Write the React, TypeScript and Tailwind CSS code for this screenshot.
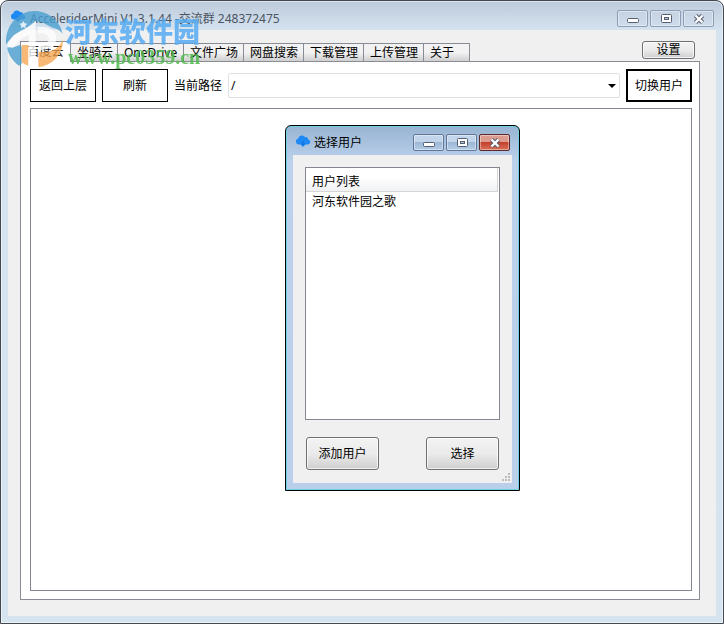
import type { ReactNode } from "react";

const tabs = [
  { label: "坐骑云", width: "w-[47px]" },
  { label: "OneDrive", width: "w-[66px]" },
  { label: "文件广场", width: "w-[60px]" },
  { label: "网盘搜索", width: "w-[60px]" },
  { label: "下载管理", width: "w-[60px]" },
  { label: "上传管理", width: "w-[60px]" },
  { label: "关于", width: "w-[46px]" },
];

function CloudIcon() {
  return (
    <svg className="h-4 w-4 shrink-0" viewBox="0 0 16 16" aria-hidden="true">
      <path
        d="M4 11.5a3 3 0 0 1-.8-5.9A3.8 3.8 0 0 1 10 4a3.1 3.1 0 0 1 3.3 2.4A2.6 2.6 0 0 1 12.6 11.5H10.5L8 14 5.5 11.5Z"
        fill="#1e88f5"
      />
      <path d="M8 8v4M6.5 10.5 8 12l1.5-1.5" stroke="#0d6ad0" fill="none" />
    </svg>
  );
}

function CaptionButton({
  kind,
  active = false,
}: {
  kind: "minimize" | "maximize" | "close";
  active?: boolean;
}) {
  const tone = !active
    ? "border-[#8d9db5] bg-linear-to-b from-[#c6d3e3] to-[#cddbea]"
    : kind === "close"
      ? "border-[#5c2a2a] bg-linear-to-b from-[#dc9c90] from-45% via-[#c4402c] via-50% to-[#d8705a]"
      : "border-[#60779a] bg-linear-to-b from-[#c3d5ea] from-45% via-[#9db7d5] via-50% to-[#b4cce6]";
  return (
    <button
      type="button"
      aria-label={kind}
      className={`flex h-[17px] w-[31px] items-center justify-center rounded-xs border inset-ring inset-ring-white/40 ${tone}`}
    >
      <svg className="h-3 w-3" viewBox="0 0 12 12" aria-hidden="true">
        {kind === "minimize" && (
          <rect x="0.5" y="5.5" width="11" height="4" rx="1" fill="#fff" stroke="#555e6e" />
        )}
        {kind === "maximize" && (
          <>
            <rect x="1.5" y="1.5" width="10" height="8" rx="1" fill="#fff" stroke="#555e6e" />
            <rect x="4.5" y="4.5" width="4" height="2" fill="#b7c9df" stroke="#555e6e" />
          </>
        )}
        {kind === "close" && (
          <>
            <path d="M2.5 2.5l7 7M9.5 2.5l-7 7" stroke="#555e6e" strokeWidth="4.4" />
            <path d="M2.5 2.5l7 7M9.5 2.5l-7 7" stroke="#fff" strokeWidth="2.4" />
          </>
        )}
      </svg>
    </button>
  );
}

function CaptionButtons({ active }: { active?: boolean }) {
  return (
    <div className="flex gap-[2px]">
      <CaptionButton kind="minimize" active={active} />
      <CaptionButton kind="maximize" active={active} />
      <CaptionButton kind="close" active={active} />
    </div>
  );
}

function FlatButton({ children, strong = false }: { children: ReactNode; strong?: boolean }) {
  return (
    <button
      type="button"
      className={`h-[33px] w-[66px] shrink-0 border-black bg-white ${strong ? "border-2" : "border"}`}
    >
      {children}
    </button>
  );
}

function RaisedButton({ children, size }: { children: ReactNode; size: string }) {
  return (
    <button
      type="button"
      className={`flex items-center justify-center rounded-[3px] border border-[#707070] bg-linear-to-b from-[#f3f3f3] from-0% via-[#ebebeb] via-50% to-[#cfcfcf] inset-ring inset-ring-white/70 ${size}`}
    >
      {children}
    </button>
  );
}

function Watermark() {
  return (
    <div className="pointer-events-none absolute top-0 left-0 z-10 h-[75px] w-[210px]" aria-hidden="true">
      <svg className="absolute top-1 left-0 h-[66px] w-[70px]" viewBox="0 0 210 198">
        <path
          d="M15 106C18 54 56 18 100 18c42 0 76 28 85 68-8-10-18-16-30-18l-28-14-22-6-34 24-32 18-24 28Z"
          fill="#4a9fd0"
          fillOpacity="0.8"
        />
        <path
          d="M18 126c4 22 14 40 36 56l8-6v-50l-6-6-22 8Z"
          fill="#4a9fd0"
          fillOpacity="0.8"
        />
        <path d="M62 120h20v62c-8-2-14-6-20-10Z" fill="#f5a048" fillOpacity="0.75" />
        <path
          d="M112 140c34 6 62-8 74-36 0 44-32 78-74 82Z"
          fill="#f5a048"
          fillOpacity="0.75"
        />
        <path
          d="M18 128c6-30 28-44 52-56 14-6 26-14 34-24v138H83V90c-20 8-36 20-43 36-8-2-16 0-22 2Z"
          fill="#fff"
          fillOpacity="0.75"
        />
        <path
          d="M108 66c34-4 58 10 58 34 0 20-20 36-54 36v-18c20 0 31-6 31-17 0-12-12-17-31-16Z"
          fill="#fff"
          fillOpacity="0.75"
        />
        <path d="m67 48 4 7 8 1-6 6 1 8-7-4-7 4 1-8-6-6 8-1Z" fill="#fff" fillOpacity="0.8" />
      </svg>
      <span className="absolute top-4 left-16 font-['Noto_Sans_CJK_SC',sans-serif] text-[27px] leading-7 font-black whitespace-nowrap text-[#55aaf2]/85 mix-blend-multiply">
        河东软件园
      </span>
      <span className="absolute top-11 left-[67px] font-['Liberation_Serif',serif] text-[20px] leading-6 font-bold whitespace-nowrap text-[#4fb84c]/85 mix-blend-multiply">
        www.pc0359.cn
      </span>
    </div>
  );
}

function UserDialog() {
  return (
    <section
      role="dialog"
      aria-labelledby="user-dialog-title"
      className="absolute top-[124px] left-[284px] flex h-[366px] w-[235px] flex-col rounded-t-md border border-black bg-linear-to-b from-[#98b4d2] via-[#bcd2ec] via-10% to-[#b9cfea] px-[7px] pb-[7px] inset-ring inset-ring-[#6fd0e4]"
    >
      <header className="flex h-[29px] shrink-0 items-center pl-[2px]">
        <CloudIcon />
        <h2 id="user-dialog-title" className="mt-1 ml-[3px] flex-1">
          选择用户
        </h2>
        <div className="mt-1 mr-[2px]">
          <CaptionButtons active />
        </div>
      </header>
      <div className="relative flex flex-1 flex-col bg-[#f0f0f0] px-3 pt-3 pb-[13px]">
        <table className="block h-[253px] w-full border border-[#828790] bg-white text-left">
          <thead className="block pr-px">
            <tr className="block h-6 border-r border-b border-[#d5d5d5] bg-linear-to-b from-white from-40% to-[#f0f1f3]">
              <th className="block px-[6px] pt-1 leading-5 font-normal">用户列表</th>
            </tr>
          </thead>
          <tbody className="block">
            <tr className="block">
              <td className="block px-[6px] leading-5">河东软件园之歌</td>
            </tr>
          </tbody>
        </table>
        <div className="mt-[17px] flex justify-between px-px">
          <RaisedButton size="h-[33px] w-[73px]">添加用户</RaisedButton>
          <RaisedButton size="h-[33px] w-[73px]">选择</RaisedButton>
        </div>
        <svg className="absolute right-px bottom-px h-[10px] w-[10px]" viewBox="0 0 10 10" aria-hidden="true">
          <path
            d="M7 1h2v2h-2zM7 4h2v2h-2zM4 4h2v2h-2zM7 7h2v2h-2zM4 7h2v2h-2zM1 7h2v2h-2z"
            fill="#bdbdbd"
          />
        </svg>
      </div>
    </section>
  );
}

export default function App() {
  return (
    <div className="relative flex min-h-screen flex-col rounded-t-lg border border-[#43474f] bg-linear-to-b from-[#bccadb] to-[#d6e4f0] to-[30px] px-[7px] pb-[7px] font-['Noto_Sans','Noto_Sans_CJK_SC',sans-serif] text-[12px] leading-4 text-black inset-ring inset-ring-white/50">
      <header className="flex h-[29px] shrink-0 items-center pl-[2px]">
        <CloudIcon />
        <h1 className="mt-[6px] ml-1 flex-1 text-[#4b5563]">AcceleriderMini V1.3.1.44 -交流群 248372475</h1>
        <div className="mt-[6px] mr-[2px]">
          <CaptionButtons />
        </div>
      </header>

      <main className="flex flex-1 flex-col bg-[#f0f0f0] pt-[11px] pr-4 pb-4 pl-3">
        <div className="flex h-5 shrink-0 items-end">
          <nav role="tablist" className="flex items-end">
            <button
              type="button"
              role="tab"
              aria-selected="true"
              className="relative z-1 -mb-px h-[21px] w-[51px] border border-b-0 border-[#898c95] bg-white text-[#222]"
            >
              百度云
            </button>
            {tabs.map((tab) => (
              <button
                key={tab.label}
                type="button"
                role="tab"
                aria-selected="false"
                className={`h-[18px] border-t border-r border-[#898c95] bg-linear-to-b from-[#f2f2f2] from-50% to-[#cfcfcf] pl-[6px] text-left ${tab.width}`}
              >
                {tab.label}
              </button>
            ))}
          </nav>
          <div className="mr-[5px] mb-[2px] ml-auto">
            <RaisedButton size="h-[18px] w-[53px]">设置</RaisedButton>
          </div>
        </div>

        <div className="flex flex-1 flex-col border border-[#898c95] bg-white pt-[7px] pr-[7px] pb-2 pl-[9px]">
          <div className="flex items-center gap-[6px]">
            <FlatButton>返回上层</FlatButton>
            <FlatButton>刷新</FlatButton>
            <label htmlFor="path" className="shrink-0">
              当前路径
            </label>
            <div className="relative h-[25px] flex-1">
              <select
                id="path"
                className="h-full w-full appearance-none rounded-xs border border-[#e0e0e0] bg-white pl-[2px]"
              >
                <option>/</option>
              </select>
              <svg
                className="pointer-events-none absolute top-[11px] right-1 h-1 w-2"
                viewBox="0 0 8 4"
                aria-hidden="true"
              >
                <path d="M0 0h8L4 4Z" />
              </svg>
            </div>
            <FlatButton strong>切换用户</FlatButton>
          </div>
          <div className="mt-[6px] flex-1 border border-[#828790] bg-white" />
        </div>
      </main>

      <Watermark />
      <UserDialog />
    </div>
  );
}
